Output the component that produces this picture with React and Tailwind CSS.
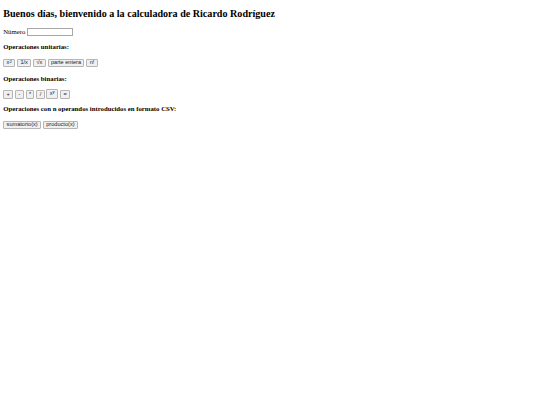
// App.jsx — calculadora de Ricardo Rodríguez (página HTML por defecto, a escala 0.4)

const Boton = ({ children, alto = false }) => (
    <button
        type="button"
        className={
            alto
                ? "-mt-[3.5px] inline-flex h-[10px] items-end justify-center rounded-[1px] border border-[#b5b5b5] bg-[#f0f0f0] px-[2.4px] pb-[1.3px] font-['Liberation_Sans',Arial,sans-serif] text-[5.6px] leading-none text-[#222]"
                : "inline-flex h-[8.2px] items-center justify-center rounded-[1px] border border-[#b5b5b5] bg-[#f0f0f0] px-[2.4px] font-['Liberation_Sans',Arial,sans-serif] text-[5.6px] leading-none text-[#222]"
        }
    >
        {children}
    </button>
);

const Fila = ({ children, corta = false }) => (
    <div className={corta ? "mt-[7.8px] -mb-[1.2px] flex items-end gap-[1.8px]" : "my-[7.8px] flex items-end gap-[1.8px]"}>
        {children}
    </div>
);

const Titulo = ({ children }) => (
    <h4 className="my-[7.8px] text-[6.75px] font-bold leading-[1.15]">{children}</h4>
);

export default function App() {
    return (
        <div className="m-[3.2px] font-['Liberation_Serif','Times_New_Roman',serif] text-black">
            <h2 className="my-[8px] text-[10.1px] font-bold leading-[1.15]">
                Buenos días, bienvenido a la calculadora de Ricardo Rodríguez
            </h2>

            <p className="my-[6.4px] flex items-center gap-[1.6px] text-[6.75px] leading-[1.15]">
                Número
                <input
                    type="text"
                    className="h-[8px] w-[46px] border border-[#a8a8a8] bg-white"
                />
            </p>

            {/* unitarias */}
            <Titulo>Operaciones unitarias:</Titulo>
            <Fila>
                <Boton>
                    x<span className="relative top-[-1.3px] text-[4.4px]">2</span>
                </Boton>
                <Boton>1/x</Boton>
                <Boton>√x</Boton>
                <Boton>parte entera</Boton>
                <Boton>n!</Boton>
            </Fila>

            {/* binarias */}
            <Titulo>Operaciones binarias:</Titulo>
            <Fila corta>
                <Boton>+</Boton>
                <Boton>-</Boton>
                <Boton>*</Boton>
                <Boton>/</Boton>
                <Boton alto>
                    x<span className="relative top-[-2px] text-[4.4px]">y</span>
                </Boton>
                <Boton>=</Boton>
            </Fila>

            {/* CSV */}
            <Titulo>Operaciones con n operandos introducidos en formato CSV:</Titulo>
            <Fila>
                <Boton>sumatorio(x)</Boton>
                <Boton>producto(x)</Boton>
            </Fila>
        </div>
    );
}
